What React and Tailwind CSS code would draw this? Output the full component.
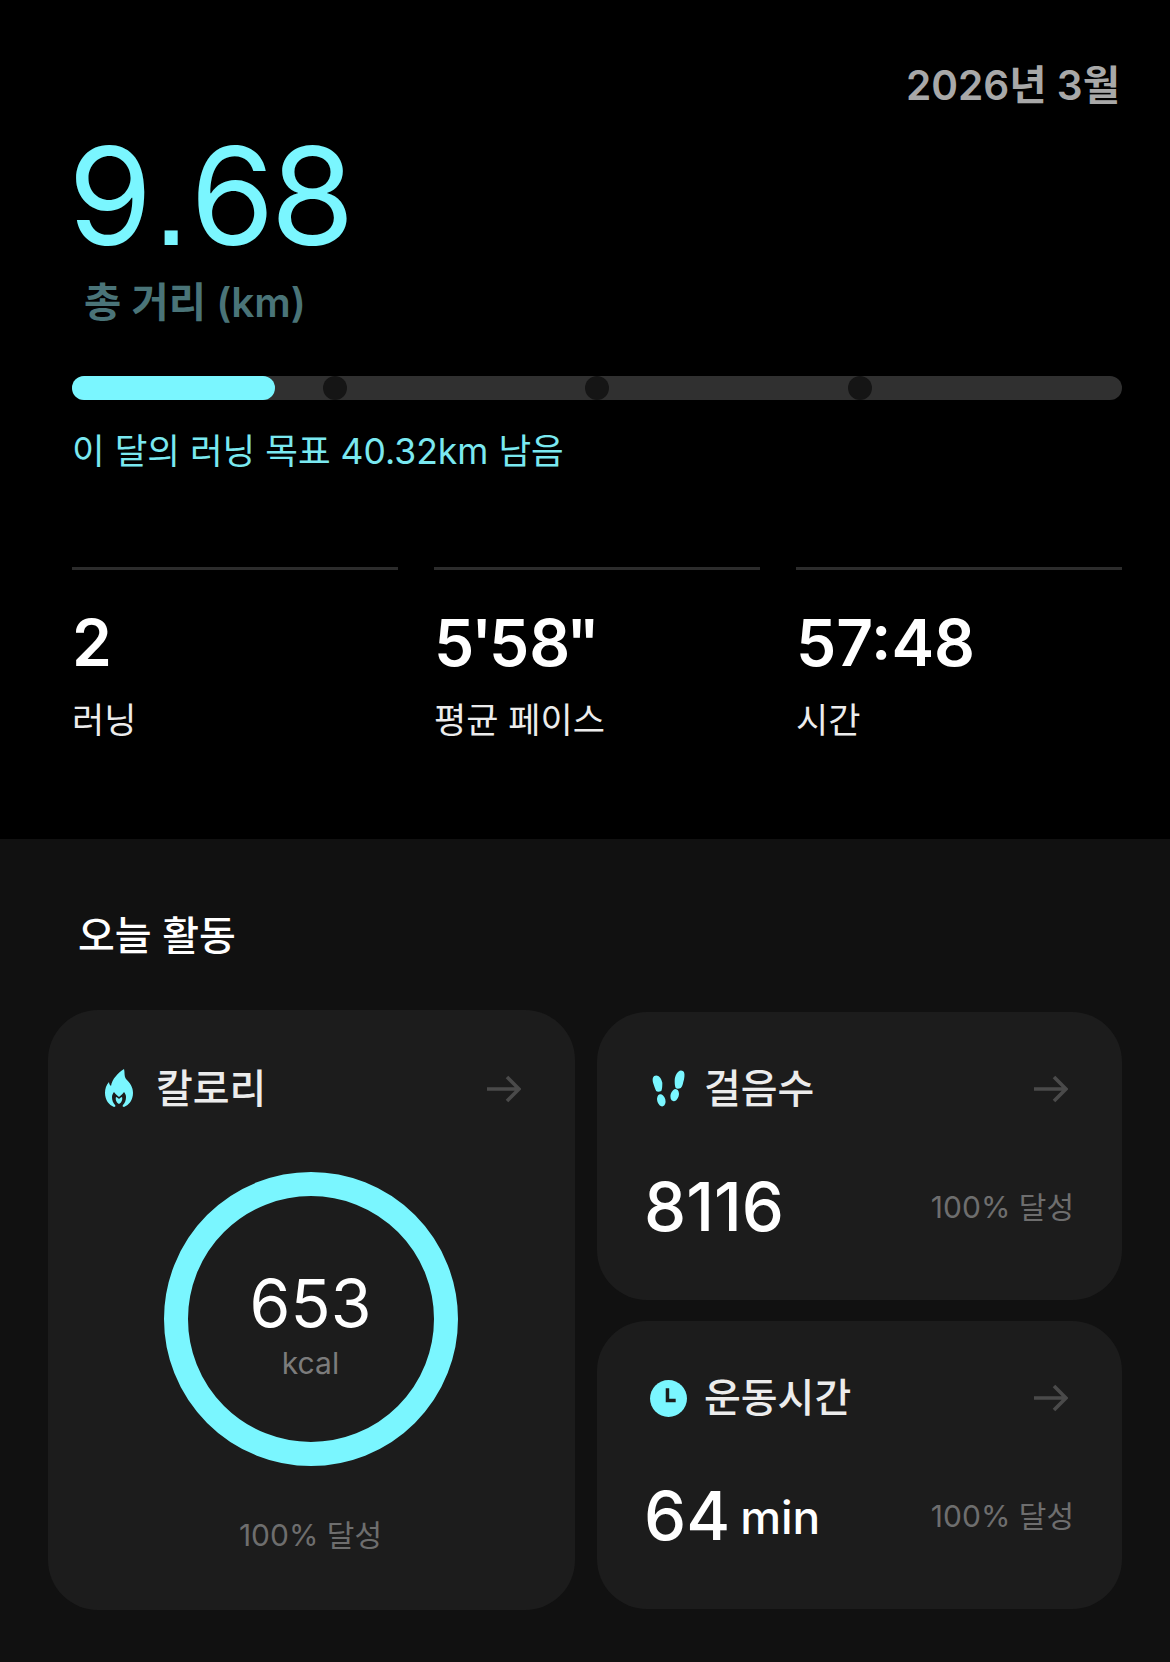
import React from 'react'

const fontStack = { fontFamily: 'Inter, "Noto Sans CJK KR", sans-serif' }

const FlameIcon = () => (
  <svg width="30" height="40" viewBox="0 0 30 40">
    <path
      fill="#7af6ff"
      fillRule="evenodd"
      d="M20 0c1 4 0 7 2 10 4 4 7 8 7 14 0 7-4 12-9 14-1 0-2-1-1-2 2-2 3-5 3-8 0-2-1-4-2-5-1 2-3 3-5 5-2-2-4-3-5-5-1 1-2 3-2 5 0 3 1 6 3 8 1 1 0 2-1 2C5 36 1 31 1 24c0-4 1-8 4-11 0 2 1 3 2 4C8 10 14 4 20 0z"
    />
    <path fill="#7af6ff" d="M15 35c-2-1-4-4-3-7 1 0 2 1 3 2 1-1 2-2 3-2 1 3-1 6-3 7z" />
  </svg>
)

const StepsIcon = () => (
  <svg width="35" height="40" viewBox="0 0 34 38">
    <g fill="#7af6ff">
      <path d="M2 13C1 9 2 6 5 6s5 3 6 7c0 3 0 6-1 8-2 1-4 1-5 0-1-2-2-5-3-8z" />
      <ellipse cx="10" cy="30" rx="4" ry="6" transform="rotate(-14 10 30)" />
      <path d="M23 11c0-5 3-10 6-10 4 0 4 4 3 9-1 3-1 6-3 8-2 1-4 1-5 0-1-2-1-5-1-7z" />
      <ellipse cx="23" cy="25" rx="4" ry="6" transform="rotate(16 23 25)" />
    </g>
  </svg>
)

const ClockIcon = () => (
  <svg width="39" height="39" viewBox="0 0 38 38">
    <circle cx="19" cy="19" r="18" fill="#7af6ff" />
    <path d="M18 9v12h8" fill="none" stroke="#1c1c1c" strokeWidth="3.4" />
  </svg>
)

const ArrowIcon = ({ className }) => (
  <svg className={className} width="34" height="28" viewBox="0 0 34 28" fill="none" stroke="#4a4a4a" strokeWidth="3.6">
    <path d="M0 14h32M20 2l12 12-12 12" />
  </svg>
)

const CardHeader = ({ icon, title, iconBox, arrowClass }) => (
  <div className="flex items-center justify-between">
    <div className="flex items-center">
      <div className={`flex justify-center ${iconBox}`}>{icon}</div>
      <span className="text-[40px] leading-[48px] font-medium text-[#ececec]">{title}</span>
    </div>
    <ArrowIcon className={arrowClass} />
  </div>
)

const Stat = ({ value, label }) => (
  <div className="border-t-[3px] border-[#2c2c2c] pt-[38px]">
    <div className="text-[64px] leading-[70px] font-semibold text-white">{value}</div>
    <div className="mt-[21px] text-[35px] leading-[42px] text-[#ececec]">{label}</div>
  </div>
)

const SmallCard = ({ icon, title, value, unit }) => (
  <div className="h-[288px] rounded-[50px] bg-[#1c1c1c] pl-[47px] pr-[48px] pt-[53px]">
    <CardHeader icon={icon} title={title} iconBox="w-[56px] mr-[8px] -ml-[4px]" arrowClass="mr-[6px]" />
    <div className="mt-[58px] flex items-center justify-between">
      <div className="flex items-center text-white">
        <span className="text-[67px] leading-[72px] font-medium">{value}</span>
        {unit && <span className="ml-[10px] mt-[2px] text-[46px] leading-[60px] font-medium">{unit}</span>}
      </div>
      <span className="text-[30px] text-[#6e6e6e]">100% 달성</span>
    </div>
  </div>
)

export default function App() {
  return (
    <div className="min-h-[1662px] w-[1170px] bg-[#111111]" style={fontStack}>
      <section className="h-[839px] bg-black pl-[72px] pr-[48px] pt-[58px]">
        <div className="pr-[2px] text-right text-[40.6px] leading-[56px] font-semibold text-[#a8a8a8]">2026년 3월</div>
        <div className="-ml-[4px] mt-[7px] text-[136px] leading-[150px] font-normal text-[#7af6ff]">
          9<span className="font-['Liberation_Sans']">.</span>
          <span className="tracking-[-4px]">68</span>
        </div>
        <div className="mt-[4px] pl-[12px] text-[40.5px] leading-[52px] font-semibold text-[#4a7478]">총 거리 (km)</div>

        <div className="relative mt-[47px] h-[24px] rounded-full bg-[#303030]">
          <div className="h-full w-[203px] rounded-full bg-[#7af6ff]" />
          <span className="absolute left-[251px] top-0 size-[24px] rounded-full bg-[#151515]" />
          <span className="absolute left-[513px] top-0 size-[24px] rounded-full bg-[#151515]" />
          <span className="absolute left-[776px] top-0 size-[24px] rounded-full bg-[#151515]" />
        </div>
        <div className="mt-[28px] text-[35.5px] leading-[48px] text-[#7ae8f0]">이 달의 러닝 목표 40.32km 남음</div>

        <div className="mt-[91px] grid grid-cols-3 gap-[36px]">
          <Stat value="2" label="러닝" />
          <Stat
            value={
              <>
                <span className="tracking-[-3px]">5'</span>5<span className="tracking-[-4px]">8</span>"
              </>
            }
            label="평균 페이스"
          />
          <Stat value="57:48" label="시간" />
        </div>
      </section>

      <section className="px-[48px] pt-[69px]">
        <h2 className="pl-[30px] text-[40px] leading-[56px] font-medium text-white">오늘 활동</h2>
        <div className="mt-[46px] grid grid-cols-[527px_525px] gap-x-[22px]">
          <div className="flex h-[600px] flex-col items-center rounded-[50px] bg-[#1c1c1c] pl-[54px] pr-[56px] pt-[55px]">
            <div className="w-full">
              <CardHeader icon={<FlameIcon />} title="칼로리" iconBox="w-[30px] mr-[22px] ml-[2px]" arrowClass="-mr-[2px]" />
            </div>
            <div className="mt-[59px] flex size-[294px] flex-col items-center justify-center rounded-full border-[24px] border-[#7af6ff] pt-[8px]">
              <span className="text-[66px] leading-[76px] text-white">653</span>
              <span className="mt-[3px] text-[30px] leading-[38px] text-[#7c7c7c]">kcal</span>
            </div>
            <span className="mt-[47px] text-[30px] text-[#6e6e6e]">100% 달성</span>
          </div>

          <div className="flex flex-col gap-[21px] pt-[2px]">
            <SmallCard icon={<StepsIcon />} title="걸음수" value="8116" />
            <SmallCard icon={<ClockIcon />} title="운동시간" value="64" unit="min" />
          </div>
        </div>
      </section>
    </div>
  )
}
